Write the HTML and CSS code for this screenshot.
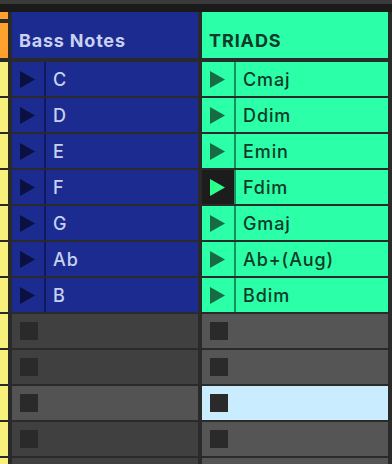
FILE: index.html
```html
<!DOCTYPE html>
<html lang="en">
<head>
    <meta charset="UTF-8">
    <title>Session Clips</title>
    <link rel="stylesheet" href="styles.css">
</head>
<body>

<div class="topbar"></div>

<div class="session">
    <!-- Scene strip -->
    <div class="strip">
        <div class="strip-head"><span></span><span></span></div>
        <div class="strip-cell"></div>
        <div class="strip-cell"></div>
        <div class="strip-cell"></div>
        <div class="strip-cell"></div>
        <div class="strip-cell"></div>
        <div class="strip-cell"></div>
        <div class="strip-cell"></div>
        <div class="strip-cell"></div>
        <div class="strip-cell"></div>
        <div class="strip-cell"></div>
        <div class="strip-cell"></div>
        <div class="strip-cell"></div>
    </div>

    <!-- Bass track -->
    <div class="track bass">
        <div class="track-head">Bass Notes</div>
        <div class="clip"><div class="play"><svg width="15" height="17" viewBox="0 0 15 17"><path d="M0 0L15 8.5L0 17Z"/></svg></div><div class="name">C</div></div>
        <div class="clip"><div class="play"><svg width="15" height="17" viewBox="0 0 15 17"><path d="M0 0L15 8.5L0 17Z"/></svg></div><div class="name">D</div></div>
        <div class="clip"><div class="play"><svg width="15" height="17" viewBox="0 0 15 17"><path d="M0 0L15 8.5L0 17Z"/></svg></div><div class="name">E</div></div>
        <div class="clip"><div class="play"><svg width="15" height="17" viewBox="0 0 15 17"><path d="M0 0L15 8.5L0 17Z"/></svg></div><div class="name">F</div></div>
        <div class="clip"><div class="play"><svg width="15" height="17" viewBox="0 0 15 17"><path d="M0 0L15 8.5L0 17Z"/></svg></div><div class="name">G</div></div>
        <div class="clip"><div class="play"><svg width="15" height="17" viewBox="0 0 15 17"><path d="M0 0L15 8.5L0 17Z"/></svg></div><div class="name">Ab</div></div>
        <div class="clip"><div class="play"><svg width="15" height="17" viewBox="0 0 15 17"><path d="M0 0L15 8.5L0 17Z"/></svg></div><div class="name">B</div></div>
        <div class="slot"><span class="stop"></span></div>
        <div class="slot"><span class="stop"></span></div>
        <div class="slot lit"><span class="stop"></span></div>
        <div class="slot"><span class="stop"></span></div>
        <div class="slot"><span class="stop"></span></div>
    </div>

    <!-- Triads track -->
    <div class="track triads">
        <div class="track-head">TRIADS</div>
        <div class="clip"><div class="play"><svg width="15" height="17" viewBox="0 0 15 17"><path d="M0 0L15 8.5L0 17Z"/></svg></div><div class="name">Cmaj</div></div>
        <div class="clip"><div class="play"><svg width="15" height="17" viewBox="0 0 15 17"><path d="M0 0L15 8.5L0 17Z"/></svg></div><div class="name">Ddim</div></div>
        <div class="clip"><div class="play"><svg width="15" height="17" viewBox="0 0 15 17"><path d="M0 0L15 8.5L0 17Z"/></svg></div><div class="name">Emin</div></div>
        <div class="clip playing"><div class="play"><svg width="15" height="17" viewBox="0 0 15 17"><path d="M0 0L15 8.5L0 17Z"/></svg></div><div class="name">Fdim</div></div>
        <div class="clip"><div class="play"><svg width="15" height="17" viewBox="0 0 15 17"><path d="M0 0L15 8.5L0 17Z"/></svg></div><div class="name">Gmaj</div></div>
        <div class="clip"><div class="play"><svg width="15" height="17" viewBox="0 0 15 17"><path d="M0 0L15 8.5L0 17Z"/></svg></div><div class="name">Ab+(Aug)</div></div>
        <div class="clip"><div class="play"><svg width="15" height="17" viewBox="0 0 15 17"><path d="M0 0L15 8.5L0 17Z"/></svg></div><div class="name">Bdim</div></div>
        <div class="slot"><span class="stop"></span></div>
        <div class="slot"><span class="stop"></span></div>
        <div class="slot selected"><span class="stop"></span></div>
        <div class="slot"><span class="stop"></span></div>
        <div class="slot"><span class="stop"></span></div>
    </div>
</div>

</body>
</html>
```

FILE: styles.css
```css
body {
    margin: 0;
    background-color: #2a2a2a;
    font-family: Inter, "Noto Sans", sans-serif;
    overflow: hidden;
}

.topbar {
    height: 8px;
    border-top: 4px solid #3a3a3a; /* lighter edge on top */
    background-color: #1a1a1a;
}

.session {
    display: flex;
    gap: 4px;
}

/* scene strip on the left */
.strip {
    width: 8px;
    display: flex;
    flex-direction: column;
    gap: 2px;
}

.strip-head {
    height: 46px;
    margin-bottom: 2px;
    display: flex;
    flex-direction: column;
    gap: 4px;
}

.strip-head span {
    background-color: #ffa12e;
    height: 7px;
}

.strip-head span + span {
    flex: 1;
}

.strip-cell {
    height: 34px;
    background-color: #f7f17c;
}

/* tracks */
.track {
    width: 186px;
    display: flex;
    flex-direction: column;
    gap: 2px;
}

.track-head {
    height: 46px;
    margin-bottom: 2px;
    box-sizing: border-box;
    padding: 18px 0 0 7px;
    font-size: 18px;
    font-weight: 700;
    letter-spacing: 0.8px;
}

.clip {
    height: 34px;
    display: flex;
}

.play {
    width: 32px;
    display: flex;
    align-items: center;
    padding-left: 8px;
    box-sizing: border-box;
}

.name {
    flex: 1;
    display: flex;
    align-items: center;
    padding-left: 7px;
    font-size: 18px;
    font-weight: 500;
    letter-spacing: 0.9px;
}

.bass .track-head,
.bass .clip {
    background-color: #1b2b8f;
    color: #c9d1f2;
}

.bass .name {
    border-left: 2px solid #0f1a5c;
}

.bass .play svg {
    fill: #0a1140;
}

.triads .track-head,
.triads .clip {
    background-color: #2bffa7;
    color: #0f3a29;
}

.triads .track-head {
    letter-spacing: 0.9px;
}

.triads .name {
    border-left: 2px solid #18915c;
}

.triads .play svg {
    fill: #176b44;
}

.triads .playing .play {
    background-color: #1c1c1c;
}

.triads .playing .play svg {
    fill: #2bff8c;
}

/* empty slots */
.slot {
    height: 34px;
    box-sizing: border-box;
    padding: 8px 0 0 8px;
    background-color: #555555;
}

.bass .slot {
    background-color: #404040;
}

.bass .slot.lit {
    background-color: #535353;
}

.triads .slot.selected {
    background-color: #c9ecff;
}

.stop {
    display: block;
    width: 18px;
    height: 18px;
    background-color: #2a2a2a;
}
```
